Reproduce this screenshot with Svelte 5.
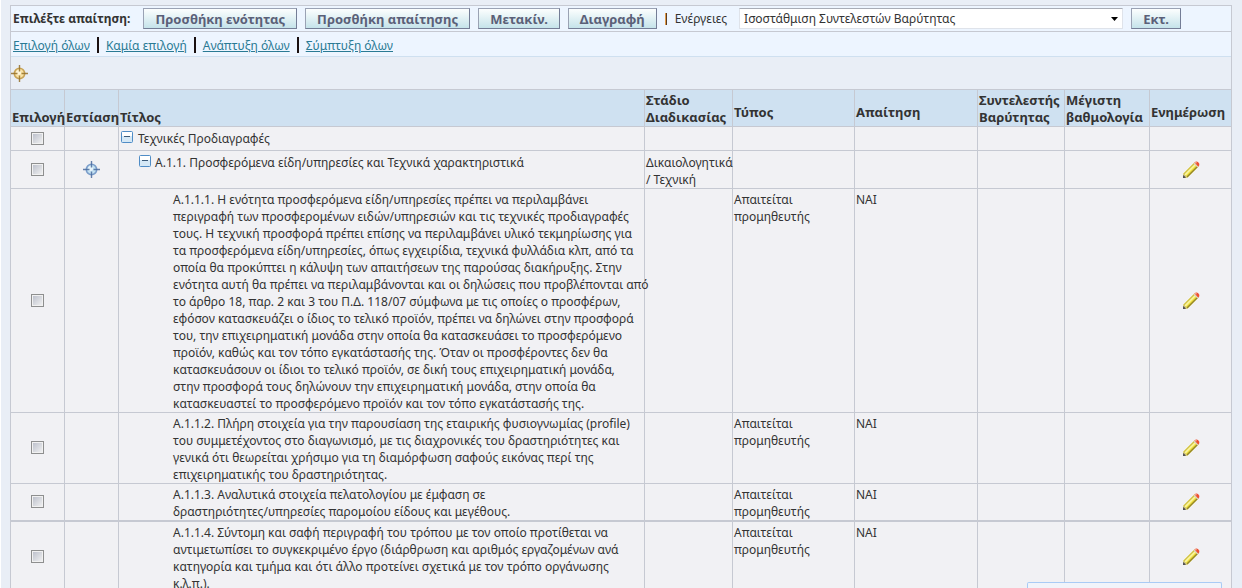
<script lang="ts">
	type Row = {
		level: number;
		title: string;
		open?: boolean;
		focus?: boolean;
		stage?: string;
		type?: string;
		answer?: string;
		editable?: boolean;
	};

	const actions = ["Προσθήκη ενότητας", "Προσθήκη απαίτησης", "Μετακίν.", "Διαγραφή"];
	const links = ["Επιλογή όλων", "Καμία επιλογή", "Ανάπτυξη όλων", "Σύμπτυξη όλων"];

	const rows: Row[] = [
		{ level: 1, title: "Τεχνικές Προδιαγραφές", open: true },
		{
			level: 2,
			title: "Α.1.1. Προσφερόμενα είδη/υπηρεσίες και Τεχνικά χαρακτηριστικά",
			open: true,
			focus: true,
			stage: "Δικαιολογητικά\n/ Τεχνική",
			editable: true,
		},
		{
			level: 3,
			title: `Α.1.1.1. Η ενότητα προσφερόμενα είδη/υπηρεσίες πρέπει να περιλαμβάνει
περιγραφή των προσφερομένων ειδών/υπηρεσιών και τις τεχνικές προδιαγραφές
τους. Η τεχνική προσφορά πρέπει επίσης να περιλαμβάνει υλικό τεκμηρίωσης για
τα προσφερόμενα είδη/υπηρεσίες, όπως εγχειρίδια, τεχνικά φυλλάδια κλπ, από τα
οποία θα προκύπτει η κάλυψη των απαιτήσεων της παρούσας διακήρυξης. Στην
ενότητα αυτή θα πρέπει να περιλαμβάνονται και οι δηλώσεις που προβλέπονται από
το άρθρο 18, παρ. 2 και 3 του Π.Δ. 118/07 σύμφωνα με τις οποίες ο προσφέρων,
εφόσον κατασκευάζει ο ίδιος το τελικό προϊόν, πρέπει να δηλώνει στην προσφορά
του, την επιχειρηματική μονάδα στην οποία θα κατασκευάσει το προσφερόμενο
προϊόν, καθώς και τον τόπο εγκατάστασής της. Όταν οι προσφέροντες δεν θα
κατασκευάσουν οι ίδιοι το τελικό προϊόν, σε δική τους επιχειρηματική μονάδα,
στην προσφορά τους δηλώνουν την επιχειρηματική μονάδα, στην οποία θα
κατασκευαστεί το προσφερόμενο προϊόν και τον τόπο εγκατάστασής της.`,
			type: "Απαιτείται\nπρομηθευτής",
			answer: "ΝΑΙ",
			editable: true,
		},
		{
			level: 3,
			title: `Α.1.1.2. Πλήρη στοιχεία για την παρουσίαση της εταιρικής φυσιογνωμίας (profile)
του συμμετέχοντος στο διαγωνισμό, με τις διαχρονικές του δραστηριότητες και
γενικά ότι θεωρείται χρήσιμο για τη διαμόρφωση σαφούς εικόνας περί της
επιχειρηματικής του δραστηριότητας.`,
			type: "Απαιτείται\nπρομηθευτής",
			answer: "ΝΑΙ",
			editable: true,
		},
		{
			level: 3,
			title: `Α.1.1.3. Αναλυτικά στοιχεία πελατολογίου με έμφαση σε
δραστηριότητες/υπηρεσίες παρομοίου είδους και μεγέθους.`,
			type: "Απαιτείται\nπρομηθευτής",
			answer: "ΝΑΙ",
			editable: true,
		},
		{
			level: 3,
			title: `Α.1.1.4. Σύντομη και σαφή περιγραφή του τρόπου με τον οποίο προτίθεται να
αντιμετωπίσει το συγκεκριμένο έργο (διάρθρωση και αριθμός εργαζομένων ανά
κατηγορία και τμήμα και ότι άλλο προτείνει σχετικά με τον τρόπο οργάνωσης
κ.λ.π.).`,
			type: "Απαιτείται\nπρομηθευτής",
			answer: "ΝΑΙ",
			editable: true,
		},
	];
</script>

{#snippet target(dark: string, mid: string, light: string)}
	<svg class="target" width="17" height="17" viewBox="0 0 17 17" aria-hidden="true">
		<circle cx="8.5" cy="8.5" r="5.2" fill={light} stroke={mid} stroke-width="1.6" />
		<circle cx="7.5" cy="7.5" r="2.5" fill="#fff" opacity="0.6" />
		<path d="M8.5 0v6.500M8.500 10.500V17M0 8.500h6.500M10.500 8.500H17" stroke={dark} stroke-width="1.4" opacity="0.85" />
	</svg>
{/snippet}

<div class="page">
	<div class="panel">
		<div class="toolbar">
			<span class="prompt">Επιλέξτε απαίτηση:</span>
			{#each actions as action}
				<button type="button">{action}</button>
			{/each}
			<span class="bar"></span>
			<label for="actions">Ενέργειες</label>
			<div class="select">
				<select id="actions">
					<option>Ισοστάθμιση Συντελεστών Βαρύτητας</option>
				</select>
				<svg width="7" height="4" viewBox="0 0 7 4" aria-hidden="true"><path d="M0 0h7L3.5 4z" /></svg>
			</div>
			<button type="button">Εκτ.</button>
		</div>
		<nav>
			{#each links as link, i}
				{#if i > 0}<span class="divider"></span>{/if}
				<a href="#top">{link}</a>
			{/each}
		</nav>
		<div class="focus-bar">
			{@render target("#94702c", "#c9a55a", "#fae3a4")}
		</div>
	</div>

	<table>
		<colgroup>
			<col class="c-select" />
			<col class="c-focus" />
			<col />
			<col class="c-stage" />
			<col class="c-type" />
			<col class="c-answer" />
			<col class="c-weight" />
			<col class="c-max" />
			<col class="c-edit" />
		</colgroup>
		<thead>
			<tr>
				<th>Επιλογή</th>
				<th>Εστίαση</th>
				<th>Τίτλος</th>
				<th>Στάδιο<br />Διαδικασίας</th>
				<th class="raised">Τύπος</th>
				<th class="raised">Απαίτηση</th>
				<th>Συντελεστής<br />Βαρύτητας</th>
				<th>Μέγιστη<br />βαθμολογία</th>
				<th class="raised">Ενημέρωση</th>
			</tr>
		</thead>
		<tbody>
			{#each rows as row}
				<tr class="row-{row.level}">
					<td class="icon"><input type="checkbox" aria-label="Επιλογή" /></td>
					<td class="icon">
						{#if row.focus}{@render target("#4a6b9e", "#7d9fcb", "#c4e2f2")}{/if}
					</td>
					<td>
						<div class="node level-{row.level}">
							{#if row.open}
								<svg class="toggle" width="12" height="12" viewBox="0 0 12 12" aria-hidden="true">
									<rect x="0.5" y="0.5" width="11" height="11" rx="1" fill="#d5e8f6" stroke="#4f8cc6" />
									<path d="M1 1h10v4H1z" fill="#fff" />
									<path d="M3 5.500h6" stroke="#3c5a78" />
								</svg>
							{/if}
							<span>{row.title}</span>
						</div>
					</td>
					<td>{row.stage ?? ""}</td>
					<td>{row.type ?? ""}</td>
					<td>{row.answer ?? ""}</td>
					<td></td>
					<td></td>
					<td class="icon">
						{#if row.editable}
							<svg class="pencil" width="18" height="18" viewBox="0 0 18 18" aria-hidden="true">
								<path d="M1 17l.5-4.500L12.500 1.500l4 4L5.500 16.500z" fill="#f0e03c" />
								<path d="M1.500 12.500L12.500 1.500l1.300 1.300L2.800 13.800z" fill="#cfc04a" />
								<path d="M2.500 13.200L13.300 2.400l1.200 1.200L3.700 14.400z" fill="#fbf6a0" />
								<path d="M4.500 15.500L15.500 4.500l1 1L5.500 16.500z" fill="#94862a" />
								<path d="M1 17l.5-4.500 4 4z" fill="#c9bf84" />
								<path d="M1 17l.3-3L4 16.800z" fill="#444450" />
								<path d="M11.500 2.500l1-1 4 4-1 1z" fill="#d8d0c8" />
								<path d="M12.500 1.500Q14 0 16 1q2 1.500 1.200 3.500l-1 1z" fill="#ee4f32" />
								<path d="M12.500 1.500Q13.500.5 15 .8L14 3z" fill="#f3a893" />
							</svg>
						{/if}
					</td>
				</tr>
			{/each}
		</tbody>
	</table>
</div>

<div class="popup"></div>

<style>
	:global(body) {
		background: #e9eef6;
	}
	.page {
		padding: 5px 10px 0 9px;
		border-left: 1px solid #fff;
		font: 12px/17px "Noto Sans", "Open Sans", sans-serif;
		color: #333;
	}
	.panel {
		border: 1px solid #c6c9d2;
		border-bottom: 0;
	}
	.toolbar {
		display: flex;
		align-items: center;
		gap: 8px;
		height: 25px;
		padding: 0 50px 0 2px;
		background: #edf5ff;
		border-bottom: 1px solid #c6c9d2;
		white-space: nowrap;
	}
	.prompt {
		font-weight: bold;
		margin-right: 5px;
	}
	button {
		height: 21px;
		padding: 1px 11px 0;
		border: 1px solid #9aa2b4;
		border-right-color: #747d96;
		border-bottom-color: #747d96;
		background: linear-gradient(#fcfefe, #c5e3ea);
		color: #5a6078;
		font: bold 13px/18px "Noto Sans", "Open Sans", sans-serif;
	}
	.bar {
		width: 1px;
		height: 12px;
		border-left: 1px solid #e09a48;
		background: #5a3a20;
	}
	.select {
		position: relative;
		flex: 1;
		display: flex;
		margin-left: 4px;
	}
	select {
		appearance: none;
		width: 100%;
		height: 21px;
		padding: 0 4px;
		border: 1px solid #dfe3ea;
		border-top-color: #a8acb6;
		border-radius: 0;
		background: #fff;
		color: #333;
		font: inherit;
	}
	.select svg {
		position: absolute;
		right: 5px;
		top: 9px;
	}
	nav {
		display: flex;
		align-items: center;
		gap: 7px;
		height: 22px;
		padding: 2px 2px 0;
		background: #edf5ff;
		border-bottom: 1px solid #cfe0f0;
	}
	a {
		color: #2a7a94;
	}
	.divider {
		width: 2px;
		height: 16px;
		background: #1a1010;
	}
	.focus-bar {
		display: flex;
		align-items: center;
		height: 32px;
	}
	svg {
		display: block;
	}
	table {
		width: 100%;
		table-layout: fixed;
		border-collapse: collapse;
		background: #f1f1f4;
	}
	.c-select,
	.c-focus {
		width: 54px;
	}
	.c-stage {
		width: 88px;
	}
	.c-type {
		width: 122px;
	}
	.c-answer {
		width: 123px;
	}
	.c-weight {
		width: 87px;
	}
	.c-max {
		width: 85px;
	}
	.c-edit {
		width: 82px;
	}
	th,
	td {
		padding: 2px 0 0 1px;
		border: 1px solid #c6c9d2;
		text-align: left;
		vertical-align: top;
		white-space: pre;
	}
	th {
		background: #cfe1f1;
		font-size: 13px;
		vertical-align: bottom;
	}
	th.raised {
		padding-bottom: 5px;
	}
	.row-1 {
		height: 24px;
	}
	.row-2 {
		height: 38px;
	}
	.row-2 td {
		padding-top: 3px;
	}
	tr td.icon {
		padding: 0;
		vertical-align: middle;
	}
	tr td.icon:first-child {
		padding-bottom: 1px;
	}
	td.icon svg {
		margin: 0 auto;
	}
	tbody tr:last-child td {
		border-top-width: 2px;
	}
	input {
		appearance: none;
		display: block;
		width: 13px;
		height: 13px;
		margin: 0 auto;
		border: 1px solid #8e8f8f;
		background: linear-gradient(135deg, #b8bcc8, #f4f4f4);
		box-shadow: inset 0 0 0 1px #f1f1f1;
	}
	.node {
		display: flex;
		align-items: flex-start;
		gap: 5px;
		padding-left: 1px;
	}
	.level-1 {
		padding-top: 1px;
	}
	.level-2 {
		padding-left: 19px;
		gap: 4px;
	}
	.level-3 {
		padding-left: 53px;
	}
	.toggle {
		flex-shrink: 0;
		margin-top: 1px;
	}
	.popup {
		position: fixed;
		right: 20px;
		bottom: 0;
		width: 193px;
		height: 5px;
		border: 1px solid #a9cbf5;
		border-bottom: 0;
		border-radius: 2px 2px 0 0;
		background: #f1f4fa;
	}
</style>
